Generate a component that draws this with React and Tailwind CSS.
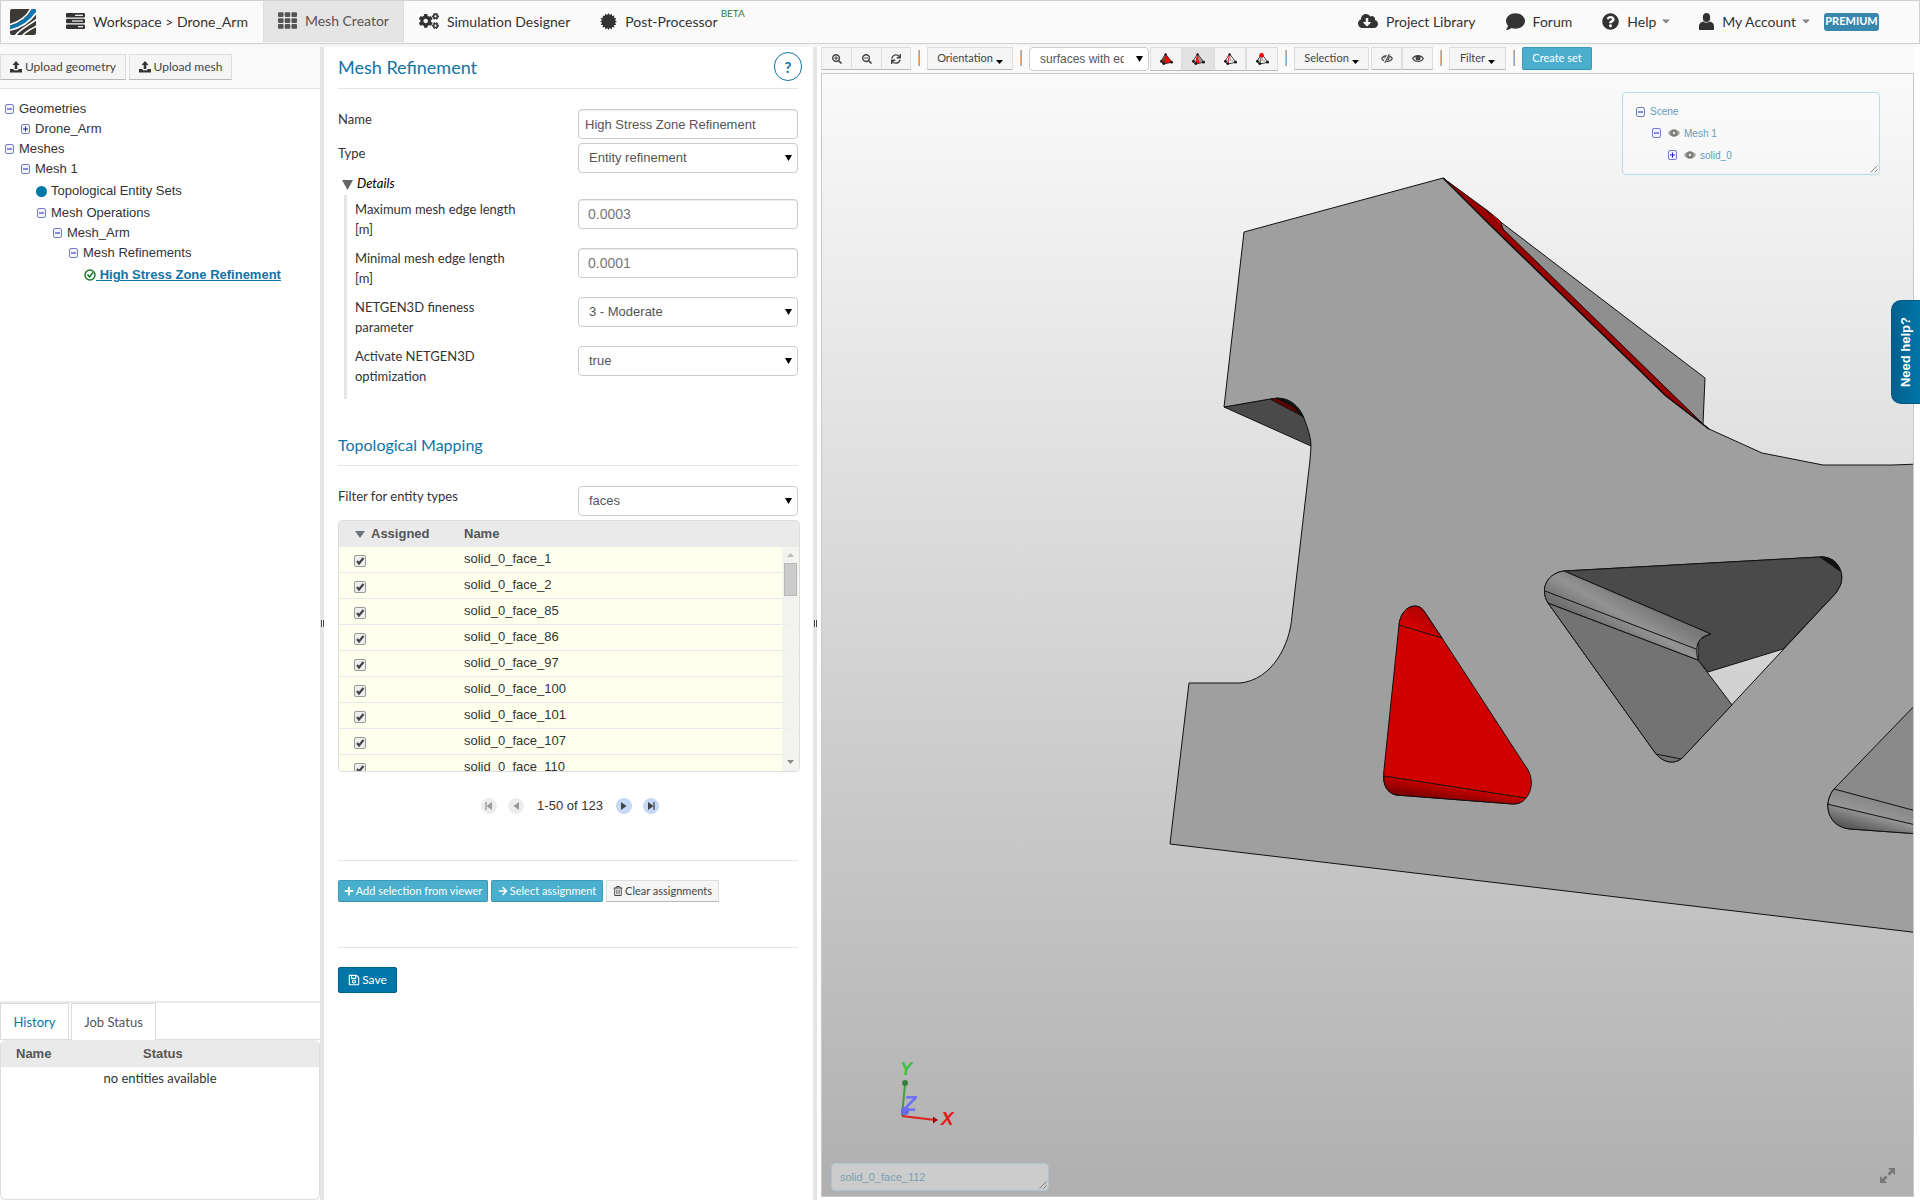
import clsx from 'clsx';
import { useState } from 'react';
import {
  FaArrowRight,
  FaCaretDown,
  FaCloudDownloadAlt,
  FaCogs,
  FaComment,
  FaPlus,
  FaQuestionCircle,
  FaRegSave,
  FaRegTrashAlt,
  FaSearchMinus,
  FaSearchPlus,
  FaSync,
  FaTh,
} from 'react-icons/fa';

const FACES = [1, 2, 85, 86, 97, 100, 101, 107, 110];

const TREE = [
  { level: 0, label: 'Geometries', kind: 'open' },
  { level: 1, label: 'Drone_Arm', kind: 'closed' },
  { level: 0, label: 'Meshes', kind: 'open' },
  { level: 1, label: 'Mesh 1', kind: 'open' },
  { level: 2, label: 'Topological Entity Sets', kind: 'dot' },
  { level: 2, label: 'Mesh Operations', kind: 'open' },
  { level: 3, label: 'Mesh_Arm', kind: 'open' },
  { level: 4, label: 'Mesh Refinements', kind: 'open' },
  { level: 5, label: 'High Stress Zone Refinement', kind: 'active' },
];

const INDENT = ['pl-[5px]', 'pl-[21px]', 'pl-[37px]', 'pl-[53px]', 'pl-[69px]', 'pl-[84px]'];

/* ---------- icons ---------- */

function Logo() {
  return (
    <svg width="26" height="26" viewBox="0 0 26 26" aria-hidden="true">
      <defs>
        <clipPath id="tile">
          <rect width="26" height="26" rx="2" />
        </clipPath>
      </defs>
      <g clipPath="url(#tile)">
        <rect width="26" height="26" fill="#3d3935" />
        <path d="M0 17 C9 14 18 9 21 0 H26 V5 C20 14 11 19 0 21 Z" fill="#0d76ae" />
        <path d="M-1 16 C9 13 17 8 21 -1" fill="none" stroke="#fff" strokeWidth="1.6" />
        <path d="M-1 21.5 C10 19 20 13 26 4" fill="none" stroke="#fff" strokeWidth="1.6" />
        <path d="M5 27 C10 20 18 17 27 10" fill="none" stroke="#fff" strokeWidth="1.6" />
        <path d="M12 27 C16 22 21 20 27 17" fill="none" stroke="#fff" strokeWidth="1.6" />
      </g>
    </svg>
  );
}

function ServerIcon() {
  return (
    <svg width="19" height="16" viewBox="0 0 19 16" aria-hidden="true">
      <g fill="#333">
        <rect width="19" height="4.5" rx="1" />
        <rect y="5.7" width="19" height="4.5" rx="1" />
        <rect y="11.4" width="19" height="4.5" rx="1" />
      </g>
      <g fill="#fafafa">
        <rect x="9" y="1.7" width="8" height="1.2" />
        <rect x="6" y="7.4" width="11" height="1.2" />
        <rect x="12" y="13.1" width="5" height="1.2" />
      </g>
    </svg>
  );
}

const BURST = Array.from({ length: 32 }, (_, i) => {
  const r = i % 2 ? 6.6 : 8.4;
  const a = (i * Math.PI) / 16;
  return `${(8.5 + r * Math.sin(a)).toFixed(2)},${(8.5 - r * Math.cos(a)).toFixed(2)}`;
}).join(' ');

function BurstIcon() {
  return (
    <svg width="17" height="17" viewBox="0 0 17 17" aria-hidden="true">
      <polygon points={BURST} fill="#333" />
    </svg>
  );
}

function UserIcon() {
  return (
    <svg width="15" height="17" viewBox="0 0 15 17" aria-hidden="true">
      <ellipse cx="7.5" cy="4.5" rx="3.7" ry="4.5" fill="#333" />
      <path d="M0 17 V13 C0 10.5 2 9.2 4.6 8.6 C6 10.2 9 10.2 10.4 8.6 C13 9.2 15 10.5 15 13 V17 Z" fill="#333" />
    </svg>
  );
}

function UploadIcon() {
  return (
    <svg width="12" height="12" viewBox="0 0 12 12" aria-hidden="true" fill="#333">
      <path d="M6 0 L9.5 4 H7.3 V8 H4.7 V4 H2.5 Z" />
      <path d="M0 8 H3.6 V9.2 H8.4 V8 H12 V11.5 H0 Z" />
    </svg>
  );
}

function EyeIcon({ slashed, className }) {
  return (
    <svg width="12" height="9" viewBox="0 0 12 9" className={className} aria-hidden="true">
      <path d="M0.6 4.5 C3 0.6 9 0.6 11.4 4.5 C9 8.4 3 8.4 0.6 4.5 Z" fill="none" stroke="currentColor" strokeWidth="1.1" />
      <circle cx="6" cy="4.1" r="2.5" fill="currentColor" />
      {slashed && (
        <>
          <path d="M3.2 9 L7.8 0" stroke="#f5f5f5" strokeWidth="2.6" />
          <path d="M3.8 9 L8.4 0" stroke="currentColor" strokeWidth="1.1" />
        </>
      )}
    </svg>
  );
}

// solid eye used in the scene tree
function VisibilityIcon() {
  return (
    <svg width="12" height="10" viewBox="0 0 12 10" className="ml-[7px] shrink-0" aria-hidden="true">
      <path d="M0 5 C2.5 0 9.5 0 12 5 C9.5 10 2.5 10 0 5 Z" fill="#aaa" />
      <circle cx="6" cy="5" r="3.6" fill="#7c7c78" />
      <circle cx="6" cy="5" r="1.3" fill="#e8e8e8" />
    </svg>
  );
}

function Toggle({ open }) {
  return (
    <svg width="9" height="10" viewBox="0 0 9 10" className="shrink-0" aria-hidden="true">
      <rect x="0.5" y="0.5" width="8" height="9" rx="1.5" fill="#f4f4fb" stroke="#6f7fc4" />
      <path d="M2 5 H7" stroke="#2020c0" />
      {!open && <path d="M4.5 2.5 V7.5" stroke="#2020c0" />}
    </svg>
  );
}

function CheckCircle() {
  return (
    <svg width="12" height="12" viewBox="0 0 12 12" className="shrink-0" aria-hidden="true">
      <circle cx="6" cy="6" r="5" fill="#fff" stroke="#1c7a2c" strokeWidth="1.5" />
      <path d="M3.5 5.5 L5.5 8 L9 3.5" fill="none" stroke="#1c7a2c" strokeWidth="1.7" />
    </svg>
  );
}

// tetrahedron glyph; `mode` picks which part is highlighted
function TetraIcon({ mode }) {
  return (
    <svg width="13" height="12" viewBox="0 0 14 13" aria-hidden="true">
      {mode === 'volume' && <path d="M1 9 L6 1 L13 10 L4 12 Z" fill="#f00" />}
      {mode === 'face' && <path d="M6 1 L13 10 L7.5 11 Z" fill="#999" />}
      {mode === 'face' && <path d="M6 1 L3.5 11.5 L8 11 Z" fill="#f00" />}
      <path d="M1 9 L6 1 L13 10 L4 12 Z" fill="none" stroke="#333" strokeWidth="1" />
      <path d="M6 1 L4 12" stroke={mode === 'edge' || mode === 'face' ? '#f00' : '#555'} />
      {mode !== 'volume' && <path d="M1 9 L7 7.5 L13 10 M6 1 L7 7.5" fill="none" stroke="#777" strokeWidth="0.7" />}
      <g fill="#111">
        <circle cx="1.5" cy="9" r="1.5" />
        <circle cx="4" cy="11.5" r="1.5" />
        <circle cx="12.5" cy="10" r="1.5" />
        <circle cx="6" cy="1.5" r="1.2" />
      </g>
      {mode === 'vertex' && <circle cx="6" cy="2.5" r="2.5" fill="#f00" />}
    </svg>
  );
}

function DownArrow({ className }) {
  return (
    <svg width="7" height="6" viewBox="0 0 7 6" preserveAspectRatio="none" className={className} aria-hidden="true">
      <path d="M0 0 H7 L3.5 6 Z" fill="currentColor" />
    </svg>
  );
}

/* ---------- form pieces ---------- */

function Select({ id, value, small, label }) {
  return (
    <div className={clsx('relative shrink-0', small ? 'w-[120px]' : 'w-[220px]')}>
      <select
        id={id}
        aria-label={label}
        defaultValue={value}
        className={clsx(
          'block w-full appearance-none overflow-hidden rounded border border-[#ccc] bg-white pl-[10px] font-[Liberation_Sans,sans-serif] text-[#555]',
          small ? 'h-[24px] pr-6 text-[12px]' : 'h-[30px] pr-6 text-[13px]'
        )}
      >
        <option>{value}</option>
      </select>
      <DownArrow className="pointer-events-none absolute right-[6px] top-1/2 -translate-y-1/2 text-black" />
    </div>
  );
}

function TextInput({ id, value, className }) {
  return (
    <input
      id={id}
      type="text"
      defaultValue={value}
      className={clsx(
        'h-[30px] w-[220px] shrink-0 rounded border border-[#ccc] bg-white font-[Liberation_Sans,sans-serif] shadow-[inset_0_1px_1px_rgba(0,0,0,0.08)]',
        className
      )}
    />
  );
}

function Field({ id, label, children }) {
  return (
    <div className="mb-[9px] flex h-[40px] items-start justify-between">
      <label htmlFor={id} className="w-[170px]">
        {label}
      </label>
      {children}
    </div>
  );
}

function GrayButton({ className, children, ...rest }) {
  return (
    <button
      type="button"
      className={clsx(
        'flex items-center justify-center whitespace-nowrap border border-[#ddd] border-b-[#b8b8b8] bg-[#f5f5f5] text-[#444]',
        className
      )}
      {...rest}
    >
      {children}
    </button>
  );
}

function BlueButton({ className, children }) {
  return (
    <button
      type="button"
      className={clsx(
        'flex items-center justify-center gap-[2px] whitespace-nowrap rounded-xs border border-[#3c9ab8] border-b-[#3590ae] bg-[#4aaecd] text-white',
        className
      )}
    >
      {children}
    </button>
  );
}

function Separator() {
  return (
    <span className="mx-[7px] mt-[3px] h-4 w-[2px] shrink-0 border-l border-r border-l-[#e3b48c] border-r-[#8fa9bd]" />
  );
}

/* ---------- header ---------- */

function NavItem({ icon, active, caret, children }) {
  return (
    <a
      href="#"
      className={clsx(
        'flex h-[41px] items-center gap-2 pb-px',
        active && 'border-x border-b border-[#ddd] bg-[#e5e5e5] px-[14px] text-[#555]',
        !active && 'pl-[15px] text-[#333]',
        !active && (caret ? 'pr-3' : 'pr-[15px]')
      )}
    >
      {icon}
      <span className="flex items-center whitespace-nowrap">
        {children}
        {caret && <FaCaretDown className="ml-1 text-[12px] text-[#888]" />}
      </span>
    </a>
  );
}

function Header() {
  return (
    <header className="flex h-[44px] shrink-0 items-start border border-[#d0d0d0] bg-[#fafafa] text-[14px]">
      <a href="#" className="ml-[9px] mr-[15px] mt-2" aria-label="Home">
        <Logo />
      </a>
      <NavItem icon={<ServerIcon />}>Workspace &gt; Drone_Arm</NavItem>
      <NavItem active icon={<FaTh className="text-[19px]" />}>
        Mesh Creator
      </NavItem>
      <NavItem icon={<FaCogs className="text-[20px]" />}>Simulation Designer</NavItem>
      <NavItem icon={<BurstIcon />}>
        Post-Processor
        <sup className="-top-2 ml-[3px] text-[10px] text-[#3c763d]">BETA</sup>
      </NavItem>
      <div className="ml-auto mr-10 flex items-center">
        <NavItem icon={<FaCloudDownloadAlt className="text-[20px]" />}>Project Library</NavItem>
        <NavItem icon={<FaComment className="text-[19px]" />}>Forum</NavItem>
        <NavItem caret icon={<FaQuestionCircle className="text-[17px]" />}>
          Help
        </NavItem>
        <NavItem caret icon={<UserIcon />}>
          My Account
        </NavItem>
        <span className="flex h-[18px] w-[55px] items-center justify-center rounded-[3px] bg-[#3a87ad] text-[11px] font-bold text-white">
          PREMIUM
        </span>
      </div>
    </header>
  );
}

/* ---------- left panel ---------- */

function TreeRow({ level, label, kind }) {
  return (
    <li
      className={clsx(
        'flex items-center',
        INDENT[level],
        kind === 'dot' || kind === 'active' ? 'h-6' : 'h-5'
      )}
    >
      {kind === 'open' && <Toggle open />}
      {kind === 'closed' && <Toggle />}
      {kind === 'dot' && <span className="-ml-px h-[11px] w-[11px] rounded-full bg-[#0076a9]" />}
      {kind === 'active' ? (
        <>
          <CheckCircle />
          <a href="#" className="whitespace-pre font-bold text-[#0f74a8] underline">
            {' '}
            {label}
          </a>
        </>
      ) : (
        <span className={kind === 'dot' ? 'ml-1' : 'ml-[5px]'}>{label}</span>
      )}
    </li>
  );
}

function Sidebar() {
  const [tab, setTab] = useState('status');

  return (
    <aside className="flex w-[320px] shrink-0 flex-col">
      <div className="flex h-[42px] items-center gap-[3px] border-b border-[#e5e5e5] bg-[#fafafa] pb-px text-[12px]">
        <GrayButton className="h-[26px] w-[126px] gap-[3px]">
          <UploadIcon />
          Upload geometry
        </GrayButton>
        <GrayButton className="h-[26px] w-[103px] gap-[3px]">
          <UploadIcon />
          Upload mesh
        </GrayButton>
      </div>
      <ul className="flex-1 pt-[10px] font-[Liberation_Sans,sans-serif] text-[13px] text-[#333]">
        {TREE.map((n) => (
          <TreeRow key={n.label} {...n} />
        ))}
      </ul>
      <section className="flex h-[199px] shrink-0 flex-col border-t-2 border-[#ebebeb] text-[13px]">
        <div className="flex h-[37px] gap-[2px] border-b border-[#ddd]">
          <button
            type="button"
            onClick={() => setTab('history')}
            className={clsx('w-[69px] border border-b-0 border-[#ddd] pt-[2px] text-[#0f74a8]', tab === 'history' && 'bg-white')}
          >
            History
          </button>
          <button
            type="button"
            onClick={() => setTab('status')}
            className="-mb-px w-[85px] border border-b-0 border-[#ddd] bg-white pt-px text-[#555]"
          >
            Job Status
          </button>
        </div>
        <div className="flex-1 overflow-hidden rounded-md border border-t-0 border-[#ddd]">
          <table className="w-full table-fixed">
            <thead className="h-[27px] bg-[#eaeaea] font-[Liberation_Sans,sans-serif] text-[#555]">
              <tr>
                <th className="w-[142px] pl-[15px] text-left">Name</th>
                <th className="text-left">Status</th>
              </tr>
            </thead>
            <tbody>
              <tr>
                <td colSpan={2} className="h-6 text-center text-[#333]">
                  no entities available
                </td>
              </tr>
            </tbody>
          </table>
        </div>
      </section>
    </aside>
  );
}

function Splitter() {
  return (
    <div className="flex w-1 shrink-0 items-center justify-center bg-[#e5e5e5]">
      <span className="h-[7px] w-[3px] border-x border-[#444] bg-white" />
    </div>
  );
}

/* ---------- settings panel ---------- */

function FaceRow({ id }) {
  const name = `solid_0_face_${id}`;
  return (
    <tr className="h-[26px] bg-[#ffffee]">
      <td className="border-b border-[#e8e8ea] pl-[15px]">
        <span className="relative mt-[3px] block h-3 w-3">
          <input
            type="checkbox"
            defaultChecked
            aria-label={name}
            className="peer block h-3 w-3 appearance-none rounded-xs border border-[#999] bg-[#eee]"
          />
          <svg
            viewBox="0 0 12 12"
            className="pointer-events-none absolute inset-0 hidden peer-checked:block"
            aria-hidden="true"
          >
            <path d="M3 6 L5 8.5 L9.5 3" fill="none" stroke="#444" strokeWidth="2.2" />
          </svg>
        </span>
      </td>
      <td className="border-b border-[#e8e8ea] pb-px">{name}</td>
    </tr>
  );
}

function PagerButton({ label, enabled, end, back }) {
  return (
    <button
      type="button"
      aria-label={label}
      disabled={!enabled}
      className={clsx(
        'flex h-4 w-4 items-center justify-center rounded-full border',
        enabled ? 'border-[#c8d4ea] bg-[#c5d9fa] text-[#444]' : 'border-[#eee] bg-[#ececec] text-[#999]'
      )}
    >
      <svg width="8" height="8" viewBox="0 0 8 8" className={back ? 'rotate-180' : undefined} aria-hidden="true">
        <path d="M1 0 L6.5 4 L1 8 Z" fill="currentColor" />
        {end && <path d="M7 0 V8" stroke="currentColor" strokeWidth="1.3" />}
      </svg>
    </button>
  );
}

function MappingTable() {
  return (
    <div className="relative -mr-[2px] mt-1 h-[252px] overflow-hidden rounded-[4px] border border-[#ddd] font-[Liberation_Sans,sans-serif] text-[13px] text-[#333]">
      <table className="w-full table-fixed border-separate border-spacing-0">
        <thead>
          <tr className="h-[26px] bg-[#eaeaea] text-left text-[#555]">
            <th className="w-[125px] pl-4">
              <DownArrow className="mr-[6px] inline-block h-[7px] w-[10px] text-[#6b7580]" />
              Assigned
            </th>
            <th>Name</th>
          </tr>
        </thead>
        <tbody>
          {FACES.map((f) => (
            <FaceRow key={f} id={f} />
          ))}
        </tbody>
      </table>
      <div className="absolute bottom-0 right-0 top-[26px] flex w-[17px] flex-col items-center bg-[#f0f0f0]/80">
        <DownArrow className="my-[6px] h-1 rotate-180 text-[#bbb]" />
        <span className="h-[33px] w-[13px] border border-[#b8b8b8] bg-[#ccc]" />
        <DownArrow className="mb-[7px] mt-auto h-1 text-[#888]" />
      </div>
    </div>
  );
}

function SettingsPanel() {
  return (
    <main className="w-[489px] shrink-0 pl-[14px] pr-[15px] text-[13px] leading-5 text-[#333]">
      <div className="relative flex h-[42px] items-center border-b border-[#e5e5e5] pb-[2px]">
        <h1 className="text-[18px] text-[#0f74a8]">Mesh Refinement</h1>
        <button
          type="button"
          aria-label="Help"
          className="absolute -right-1 top-[5px] h-[29px] w-7 rounded-full border border-[#0f74a8] text-[15px] font-bold text-[#0f74a8]"
        >
          ?
        </button>
      </div>

      <div className="mt-5 flex items-start justify-between">
        <label htmlFor="name">Name</label>
        <TextInput id="name" value="High Stress Zone Refinement" className="pl-[6px] text-[#555]" />
      </div>
      <div className="mt-1 flex items-start justify-between">
        <label htmlFor="type">Type</label>
        <Select id="type" value="Entity refinement" />
      </div>

      <details open>
        <summary className="flex h-[22px] cursor-pointer list-none items-center gap-1 pb-[2px] pl-1 italic text-black">
          <DownArrow className="mt-[3px] h-[10px] w-[11px] text-[#666]" />
          Details
        </summary>
        <div className="ml-[6px] h-[204px] border-l-[3px] border-[#e5e5e5] pl-2 pt-1">
          <Field id="max-edge" label="Maximum mesh edge length [m]">
            <TextInput id="max-edge" value="0.0003" className="pl-[9px] text-[14px] text-[#777]" />
          </Field>
          <Field id="min-edge" label="Minimal mesh edge length [m]">
            <TextInput id="min-edge" value="0.0001" className="pl-[9px] text-[14px] text-[#777]" />
          </Field>
          <Field id="fineness" label="NETGEN3D fineness parameter">
            <Select id="fineness" value="3 - Moderate" />
          </Field>
          <Field id="optimize" label="Activate NETGEN3D optimization">
            <Select id="optimize" value="true" />
          </Field>
        </div>
      </details>

      <h2 className="mt-9 border-b border-[#e5e5e5] pb-[10px] text-[16px] text-[#0f74a8]">Topological Mapping</h2>
      <div className="mt-5 flex items-start justify-between">
        <label htmlFor="filter">Filter for entity types</label>
        <Select id="filter" value="faces" />
      </div>
      <MappingTable />

      <nav className="mt-6 flex items-center justify-center gap-[11px] pl-1 font-[Liberation_Sans,sans-serif]">
        <PagerButton label="First page" end back />
        <PagerButton label="Previous page" back />
        <span className="mx-[2px]">1-50 of 123</span>
        <PagerButton label="Next page" enabled />
        <PagerButton label="Last page" enabled end />
      </nav>

      <div className="mt-11 flex gap-[3px] border-t border-[#e5e5e5] pt-[19px] text-[11px]">
        <BlueButton className="h-[22px] w-[150px]">
          <FaPlus className="text-[10px]" />
          Add selection from viewer
        </BlueButton>
        <BlueButton className="h-[22px] w-[112px]">
          <FaArrowRight className="text-[10px]" />
          Select assignment
        </BlueButton>
        <GrayButton className="h-[22px] w-[113px] gap-[2px]">
          <FaRegTrashAlt className="text-[10px]" />
          Clear assignments
        </GrayButton>
      </div>

      <div className="mt-[45px] border-t border-[#e5e5e5] pt-[19px]">
        <button
          type="button"
          className="flex h-[26px] w-[59px] items-center justify-center gap-[2px] rounded-xs border border-[#00608c] bg-[#0076a9] text-[12px] text-white"
        >
          <FaRegSave className="text-[12px]" />
          Save
        </button>
      </div>
    </main>
  );
}

/* ---------- viewer ---------- */

function ViewerToolbar() {
  return (
    <div className="flex h-[26px] items-start bg-[#fafafa] text-[11px]">
      <div className="flex h-[23px]">
        <GrayButton className="w-[31px]" aria-label="Zoom in">
          <FaSearchPlus className="text-[10px]" />
        </GrayButton>
        <GrayButton className="-ml-px w-[31px]" aria-label="Zoom out">
          <FaSearchMinus className="text-[10px]" />
        </GrayButton>
        <GrayButton className="-ml-px w-[30px]" aria-label="Reset view">
          <FaSync className="text-[10px]" />
        </GrayButton>
      </div>
      <Separator />
      <GrayButton className="h-[23px] w-[86px] gap-[3px]">
        Orientation
        <DownArrow className="mt-[6px] h-1 text-black" />
      </GrayButton>
      <Separator />
      <Select small label="Render mode" value="surfaces with edges" />
      <div className="ml-px flex h-[24px]">
        <GrayButton className="w-[32px]" aria-label="Pick volumes">
          <TetraIcon mode="volume" />
        </GrayButton>
        <GrayButton className="w-[32px] border-[#ccc] bg-[#e2e2e2]!" aria-label="Pick faces">
          <TetraIcon mode="face" />
        </GrayButton>
        <GrayButton className="w-[32px]" aria-label="Pick edges">
          <TetraIcon mode="edge" />
        </GrayButton>
        <GrayButton className="w-[32px]" aria-label="Pick vertices">
          <TetraIcon mode="vertex" />
        </GrayButton>
      </div>
      <Separator />
      <GrayButton className="h-[23px] w-[75px] gap-[3px]">
        Selection
        <DownArrow className="mt-[6px] h-1 text-black" />
      </GrayButton>
      <div className="ml-[2px] flex h-[23px]">
        <GrayButton className="w-[31px]" aria-label="Hide selection">
          <EyeIcon slashed />
        </GrayButton>
        <GrayButton className="w-[31px]" aria-label="Show all">
          <EyeIcon />
        </GrayButton>
      </div>
      <Separator />
      <GrayButton className="h-[23px] w-[57px] gap-[3px]">
        Filter
        <DownArrow className="mt-[6px] h-1 text-black" />
      </GrayButton>
      <Separator />
      <BlueButton className="h-[23px] w-[70px]">Create set</BlueButton>
    </div>
  );
}

function DroneArm() {
  return (
    <svg
      viewBox="822 74 1091 1122"
      preserveAspectRatio="xMaxYMin slice"
      className="absolute inset-0 h-full w-full"
      role="img"
      aria-label="Drone arm geometry"
    >
      <defs>
        <linearGradient id="roll" gradientUnits="userSpaceOnUse" x1="1640" y1="600" x2="1618" y2="638">
          <stop offset="0" stopColor="#777" />
          <stop offset="0.5" stopColor="#939393" />
          <stop offset="1" stopColor="#707070" />
        </linearGradient>
        <linearGradient id="redRoll" gradientUnits="userSpaceOnUse" x1="1455" y1="785" x2="1452" y2="803">
          <stop offset="0" stopColor="#d00000" />
          <stop offset="1" stopColor="#7a0000" />
        </linearGradient>
        <linearGradient id="redTop" gradientUnits="userSpaceOnUse" x1="1402" y1="632" x2="1420" y2="604">
          <stop offset="0.3" stopColor="#d00000" />
          <stop offset="1" stopColor="#a00" />
        </linearGradient>
        <linearGradient id="roll2" gradientUnits="userSpaceOnUse" x1="1870" y1="795" x2="1860" y2="830">
          <stop offset="0" stopColor="#858585" />
          <stop offset="0.5" stopColor="#959595" />
          <stop offset="1" stopColor="#5a5a5a" />
        </linearGradient>
      </defs>
      <g stroke="#111" strokeWidth="1" strokeLinejoin="round">
        {/* rear faces that show behind the front plate */}
        <path d="M1443 178 L1705 378 L1703 424 Z" fill="#8f8f8f" />
        <path d="M1224 407 L1270 399 L1280 398 L1300 410 L1311 432 V446 Z" fill="#4a4a4a" />
        <path d="M1270 399 L1280 398 L1292 404 L1304 417 Z" fill="#600" />

        {/* front plate with its cut-outs */}
        <path
          fillRule="evenodd"
          fill="#9f9f9f"
          d="M1443 178 L1244 232 L1224 407 L1270 399 C1287 396 1297 403 1303 416 C1309 430 1311 440 1311 446
             L1310 460 L1292 616 C1290 645 1272 680 1240 683 L1189 683 L1170 844 L1920 933 V464 L1892 465 H1823
             L1762 453 L1709 429 L1666 396 Z
             M1564 571 L1820 557 C1836 556 1846 572 1840 586 L1836 593 L1685 755 C1677 765 1665 764 1656 754
             L1548 603 C1539 588 1548 573 1564 571 Z"
        />
        <path d="M1276 398 C1290 398 1298 406 1304 418 L1292 406 Z" fill="#111" />

        {/* highlighted ridge */}
        <path d="M1443 178 L1488 211 L1500 221 L1503 229 L1704 425 L1709 429 L1666 396 L1488 223 Z" fill="#900" />
        <path d="M1443 178 L1488 223 L1666 396 L1709 429" fill="none" strokeWidth="1.5" />
        <path d="M1486 210 L1500 221 L1503 229 Z" fill="#d00000" strokeWidth="0.6" />

        {/* highlighted pocket */}
        <path
          d="M1399 625 C1400 614 1407 606 1415 606 C1419 606 1422 608 1424 611 L1442 638 L1528 770 C1536 784 1529 804 1513 804
             L1396 795 C1387 793 1382 785 1384 770 Z"
          fill="#d00000"
        />
        <path d="M1399 625 C1400 614 1407 606 1415 606 C1419 606 1422 608 1424 611 L1442 638 Z" fill="url(#redTop)" />
        <path d="M1384 776 L1526 798 C1523 802 1519 804 1513 804 L1396 795 C1388 793 1383 786 1384 776 Z" fill="url(#redRoll)" />

        {/* center pocket */}
        <path
          d="M1564 571 L1820 557 C1836 556 1846 572 1840 586 L1836 593 L1783 649 L1708 672 L1698 660 V640 L1711 634 Z"
          fill="#4a4a4a"
        />
        <path d="M1820 557 C1832 557 1838 562 1840 571 Z" fill="#111" />
        <path d="M1548 603 L1698 660 L1732 705 L1685 755 C1677 765 1665 764 1656 754 Z" fill="#737373" />
        <path
          d="M1564 571 L1711 634 C1699 636 1694 645 1698 660 L1548 603 C1539 588 1548 573 1564 571 Z"
          fill="url(#roll)"
        />
        <path d="M1545 591 L1696 649 M1656 754 L1681 759" fill="none" />

        {/* right pocket */}
        <path d="M1920 700 L1834 789 C1822 804 1828 827 1850 829 L1920 834 Z" fill="#8a8a8a" />
        <path d="M1834 789 L1920 812 V834 L1850 829 C1828 827 1822 804 1834 789 Z" fill="url(#roll2)" />
        <path d="M1827 804 L1920 826" fill="none" />
      </g>
    </svg>
  );
}

function AxisTriad() {
  return (
    <svg width="60" height="70" viewBox="0 0 60 70" className="absolute bottom-[66px] left-[75px]" aria-hidden="true">
      <path d="M5 56 L8 24" stroke="#3f9f3f" strokeWidth="2" />
      <circle cx="8" cy="23" r="3" fill="#3a7f3f" />
      <path d="M5 56 L38 60" stroke="#d22" strokeWidth="2" />
      <path d="M36 56.5 L41 60 L36 63.5 Z" fill="#900" />
      <circle cx="8" cy="51" r="4" fill="#6565e8" />
      <g className="font-[Liberation_Sans,sans-serif] font-bold italic">
        <text x="3" y="15" fontSize="18" fill="#3fbf3f">
          Y
        </text>
        <text x="6" y="51" fontSize="22" fill="#6f6fff">
          Z
        </text>
        <text x="44" y="65" fontSize="19" fill="#e41b1b">
          X
        </text>
      </g>
    </svg>
  );
}

function ResizeGrip() {
  return (
    <svg width="8" height="8" viewBox="0 0 8 8" className="absolute bottom-px right-px" aria-hidden="true">
      <path d="M0.5 7.5 L7.5 0.5 M4.5 7.5 L7.5 4.5" stroke="#777" strokeWidth="0.9" />
    </svg>
  );
}

function SceneTree() {
  return (
    <div className="absolute right-[33px] top-[18px] h-[83px] w-[258px] rounded-[4px] border border-[#b5dfe8] bg-white/30 pt-2 font-[Liberation_Sans,sans-serif] text-[10px] text-[#5f9dbd]">
      <ul>
        <li className="flex h-[21px] items-center pl-[13px]">
          <Toggle open />
          <span className="ml-[5px]">Scene</span>
        </li>
        <li className="flex h-[22px] items-center pl-[29px]">
          <Toggle open />
          <VisibilityIcon />
          <span className="ml-1">Mesh 1</span>
        </li>
        <li className="flex h-[22px] items-center pl-[45px]">
          <Toggle />
          <VisibilityIcon />
          <span className="ml-1">solid_0</span>
        </li>
      </ul>
      <ResizeGrip />
    </div>
  );
}

function Viewer() {
  return (
    <section className="ml-1 mr-[6px] flex min-w-0 flex-1 flex-col pb-[3px]">
      <ViewerToolbar />
      <div className="relative flex-1 overflow-hidden border border-[#c8c8c8] bg-linear-to-b from-[#fafafa] to-[#b0b0b0]">
        <DroneArm />
        <AxisTriad />
        <SceneTree />
        <div className="absolute bottom-[5px] left-[9px] flex h-7 w-[218px] items-center rounded-[4px] border border-[#adc3c9] bg-white/35 pl-2 font-[Liberation_Sans,sans-serif] text-[11px] text-[#7b9fb0]">
          solid_0_face_112
          <ResizeGrip />
        </div>
        <button type="button" aria-label="Full screen" className="absolute bottom-[13px] right-[18px]">
          <svg width="15" height="15" viewBox="0 0 15 15" fill="#777">
            <path d="M8 0 H15 V7 L12.5 4.5 L9.5 7.5 L7.5 5.5 L10.5 2.5 Z" />
            <path d="M7 15 H0 V8 L2.5 10.5 L5.5 7.5 L7.5 9.5 L4.5 12.5 Z" />
          </svg>
        </button>
      </div>
    </section>
  );
}

export default function App() {
  return (
    <div className="relative flex h-screen flex-col overflow-hidden bg-white font-[Lato,sans-serif]">
      <Header />
      <div className="h-[3px] shrink-0 bg-[#f6f6f6]" />
      <div className="flex min-h-0 flex-1">
        <Sidebar />
        <Splitter />
        <SettingsPanel />
        <Splitter />
        <Viewer />
      </div>
      <button
        type="button"
        className="absolute right-0 top-[300px] flex h-[104px] w-[29px] items-center justify-center rounded-l-[10px] border border-r-0 border-[#00587f] bg-linear-to-r from-[#00608c] to-[#0076a9] font-[Liberation_Sans,sans-serif] text-[13px] font-bold text-white"
      >
        <span className="rotate-180 [writing-mode:vertical-rl]">Need help?</span>
      </button>
    </div>
  );
}
